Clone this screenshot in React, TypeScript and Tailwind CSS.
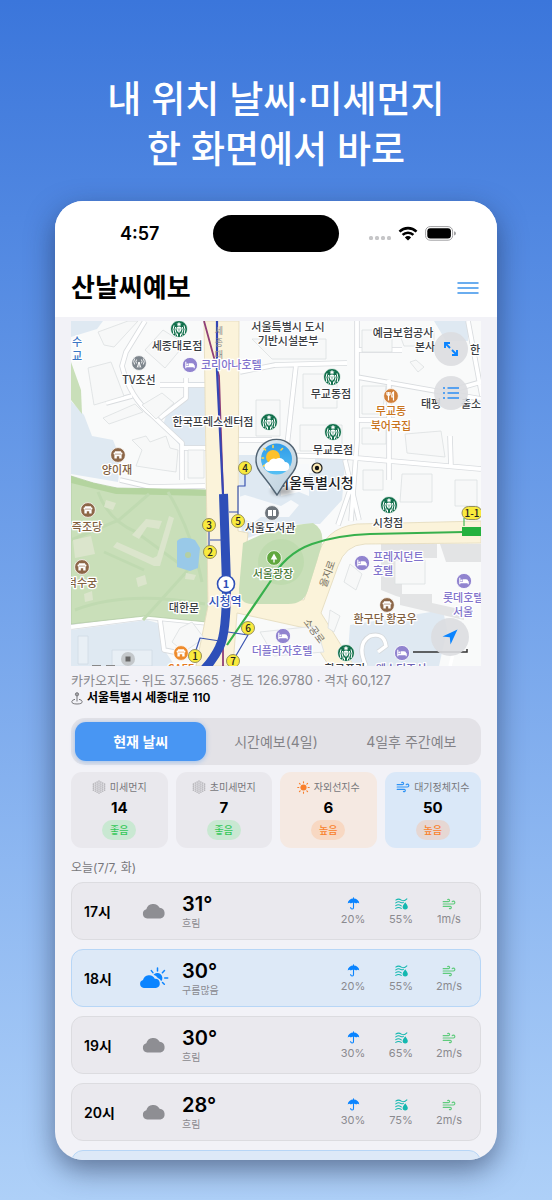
import React from "react";
import { Wind } from "lucide-react";

const sans = "font-['Inter','Noto_Sans_CJK_KR',sans-serif]";

function Starbucks({ x, y }: { x: number; y: number }) {
  return (
    <g transform={`translate(${x} ${y})`}>
      <circle r="8.5" fill="#12704c" stroke="#fff" strokeWidth="0.8" />
      <path d="M0-7.2L.8-5.6 2.5-5.4 1.3-4.2 1.6-2.9 0-3.5-1.6-2.9-1.3-4.2-2.5-5.4-.8-5.6z" fill="#fff" />
      <path d="M-2.6-1.2Q0-4 2.6-1.2Q2.6 2.6 0 3.8Q-2.6 2.6-2.6-1.2z" fill="#fff" />
      <path d="M-1.5-.2h1M.5-.2h1M-.8 1.9h1.6M0 0v1" stroke="#12704c" strokeWidth="0.6" />
      <path d="M-3.4-2Q-4.6 1-3.2 3.2T-3.6 6.6M3.4-2Q4.6 1 3.2 3.2T3.6 6.6M-5-3.6Q-6.8 0-5.2 5M5-3.6Q6.8 0 5.2 5M-1.5 4.6v2.8M1.5 4.6v2.8" fill="none" stroke="#fff" strokeWidth="1" />
    </g>
  );
}

function Hotel({ x, y }: { x: number; y: number }) {
  return (
    <g transform={`translate(${x} ${y})`}>
      <circle r="7.6" fill="#9184cf" stroke="#fff" strokeWidth="0.8" />
      <path d="M-4.2-3.2v6.4M-4.2 1.6h8.4M4.2 3.2V.2" stroke="#fff" strokeWidth="1.1" fill="none" />
      <path d="M-1.4-1.8h3.4q2.2 0 2.2 2.2v.6h-5.6z" fill="#fff" />
      <circle cx="-2.7" cy="-.4" r="1" fill="#fff" />
    </g>
  );
}

function Palace({ x, y, color = "#8d6748" }: { x: number; y: number; color?: string }) {
  return (
    <g transform={`translate(${x} ${y})`}>
      <circle r="7.4" fill={color} stroke="#fff" strokeWidth="0.8" />
      <path d="M-4.4-2.2Q-3-2.2-3-3.8h6Q3-2.2 4.4-2.2v1.4H3.6v4.4H1.200V1.200h-2.400v2.400h-2.400V-.8h-.8z" fill="#fff" />
      <path d="M-3-.9h6" stroke={color} strokeWidth="0.6" />
    </g>
  );
}

function Exit({ x, y, n, w = 13 }: { x: number; y: number; n: string; w?: number }) {
  return (
    <g>
      <rect x={x - w / 2} y={y - 6.5} width={w} height="13" rx="6.5" fill="#f9ea3d" stroke="#8a8552" strokeWidth="0.9" />
      <text x={x} y={y + 3.5} textAnchor="middle" fontSize="10" fontWeight="500" fill="#222">{n}</text>
    </g>
  );
}

const labels: { x: number; y: number; t: string; c?: string; a?: "start" | "middle" }[] = [
  { x: 177, y: 350, t: "세종대로점" },
  { x: 139, y: 384, t: "TV조선" },
  { x: 201, y: 369, t: "코리아나호텔", c: "#8173cc", a: "start" },
  { x: 213, y: 426, t: "한국프레스센터점" },
  { x: 288, y: 331, t: "서울특별시 도시" },
  { x: 288, y: 345, t: "기반시설본부" },
  { x: 403, y: 337, t: "예금보험공사" },
  { x: 425, y: 351, t: "본사" },
  { x: 475, y: 354, t: "한" },
  { x: 331, y: 398, t: "무교동점" },
  { x: 333, y: 454, t: "무교로점" },
  { x: 391, y: 415, t: "무교동", c: "#c87420" },
  { x: 391, y: 430, t: "북어국집", c: "#c87420" },
  { x: 431, y: 408, t: "태평" },
  { x: 471, y: 408, t: "출소" },
  { x: 117, y: 474, t: "양이재", c: "#80603f" },
  { x: 87, y: 531, t: "즉조당", c: "#80603f" },
  { x: 82, y: 587, t: "덕수궁", c: "#80603f" },
  { x: 184, y: 612, t: "대한문" },
  { x: 270, y: 532, t: "서울도서관" },
  { x: 273, y: 578, t: "서울광장", c: "#4b7b3c" },
  { x: 388, y: 527, t: "시청점" },
  { x: 373, y: 561, t: "프레지던트", c: "#8173cc", a: "start" },
  { x: 373, y: 575, t: "호텔", c: "#8173cc", a: "start" },
  { x: 443, y: 602, t: "롯데호텔", c: "#8173cc", a: "start" },
  { x: 463, y: 616, t: "서울", c: "#8173cc" },
  { x: 385, y: 623, t: "환구단 황궁우", c: "#80603f" },
  { x: 282, y: 655, t: "더플라자호텔", c: "#8173cc" },
  { x: 345, y: 673, t: "한국프리" },
  { x: 401, y: 673, t: "웨스틴조선", c: "#6d62b4" },
  { x: 77, y: 346, t: "수", c: "#3b76c4" },
  { x: 77, y: 360, t: "교", c: "#3b76c4" },
  { x: 181, y: 673, t: "CAFE", c: "#e57a1f" },
];

const lanes =
  "M145 321L126 352 122 366Q130 398 152 415L182 443 182 480M106 403l26-7M160 418l26-20v-20M160 385h46M182 448h26M240 372l35-7 72-2M296 365l-10 90M357 321v120l-6 80M275 455l70 2 136 12M357 377l124 22M357 350h45M357 420h38M389 380v100M481 382l-35 10M237 440h35M450 436l1 32M345 460l14 60M350 490l-12 35M71 627l76-10 61 6M160 620l4 30 30 6M120 480l30 7 55-1M468 321l14 75";

function CityMap() {
  return (
    <svg viewBox="71 321 410 345" preserveAspectRatio="xMidYMid slice" role="img" aria-label="지도" className="block h-full w-full font-['Noto_Sans_CJK_KR',sans-serif]">
      <rect x="71" y="321" width="410" height="345" fill="#f9fafa" />
      {/* water-blue blocks */}
      <g fill="#dfe9f2">
        <path d="M71 401L84 415 92 436 113 440 121 460 118 482 71 474zM71 321h32l-6 8-26 8z" />
        <path d="M186 382h19v65h-24l-18-22 5-15 16-12z" />
        <path d="M238 455h31v18h46v-18h31l-4 45-22 24h-34l-44 16z" />
        <path d="M71 630l76-10 14 4 2 24 12 18H71z" />
        <path d="M350 625l93-15 4 20-8 36h-92z" />
        <path d="M434 321h34v20h-22z" />
      </g>
      <g fill="#e3e4e5">
        <path d="M381 544h56v14h-28l-7 14v22h30v12l-36-10-15-6zM440 544h41v18h-35z" />
        <path d="M400 596l64 14v10l-64-15z" />
      </g>
      {/* minor roads */}
      <g fill="none" strokeLinejoin="round">
        <path stroke="#d9dcdf" strokeWidth="5.5" d={lanes} />
        <path stroke="#fff" strokeWidth="3.8" d={lanes} />
      </g>
      {/* parks */}
      <path d="M71 476q22 8 46 12l91 2 2 90-3 42-62-6-74 8z" fill="#c9dfb9" stroke="#b3cba4" strokeWidth="0.8" />
      <path d="M71 476q22 8 46 12l91 2v6l-92-2-45-11z" fill="#b4d49f" />
      <path d="M71 362l10 28 1 24-11-14z" fill="#c9dfb9" />
      <g fill="none" stroke="#c0dab1" strokeWidth="3">
        <path d="M98 492q10 28 38 40l52 38-45 50M75 610q50-20 130-6M168 492q24 40 34 90M104 552l40 18M71 540l48-20 30-26" />
      </g>
      <g fill="#dbe5cc">
        <path d="M113 547l4-5 36 16 4-2 12-40 5 2-14 48-6 0zM132 535l14-16 16 2-3 8-12-2-8 12zM136 578l9-3 2 9-9 3zM73 540l18-4 4 18-20 4zM84 594l8-3 1 9-8 2zM106 500l10 3-3 7-9-3zM186 573l10 2-2 5-9-1z" />
      </g>
      <path d="M177 541q6-6 18-1l5 8-2 20-8 3-13-4z" fill="#99c9e8" />
      <circle cx="188" cy="555" r="3" fill="#b4cfa3" />
      {/* arterial roads */}
      <g fill="#fbf3da" stroke="#e5dcc0" strokeWidth="0.9">
        <path d="M204 321h35l-1 210 10 2-6 62 62 5 13-40q6-32 40-36l124-3v22l-116 1q-20 1-27 22l-17 47 33 53h-25l-24-38-68-15-4 53h-37l12-60z" />
      </g>
      <path d="M243 543q18-8 34-16l36-4q14 8 7 28l-12 39q-4 14-20 14h-36q-13 0-13-15z" fill="#c9dfb9" />
      <circle cx="281" cy="562" r="23" fill="#b9d8a9" opacity=".6" />
      {/* building outlines */}
      <g fill="#f7f8f8" stroke="#dcdfe1" strokeWidth="0.8">
        <path d="M88 368l23-6 13 34-30 9zM98 332l30-11h10l-24 26-10-2zM145 350l18-20 22 14-20 24zM142 405l20-12 12 10-18 16zM132 440l14-4 4 6 16-6 4 12 8 2-2 22-14-2-26-4 6-16zM188 450h16v28h-16zM103 418l32-14 8 8-34 12z" />
        <path d="M252 339h74v20h-54zM256 400h24v36h-24zM303 374h34v34h-34zM300 425h42v26h-42zM362 386h24l-4 28h-20zM362 428h24v16h-24zM405 434l36-3 4 26-38-4zM402 474h30v28h-32zM363 470h20v20h-20zM410 362l8 10 6-5-8-7zM398 330h36v16h-30zM455 480h22v26h-22zM362 330h30v22h-30z" />
        <path d="M395 560h30v24h-30zM350 564l12 10-6 16-12-8zM180 628l12-6 12 16-20 14-12-10zM330 610l10 6-6 16-6-4zM260 632l56-6 8 26-50 4z" />
        <path d="M112 650h40v16h-40zM78 636h10v28H78z" fill="#e8eff5" stroke="#cfdae4" />
        <path d="M269 464h40v32l-10-4-18 4v-8h-12zM245 495l-6 2v20l14 6 8-6h28l10-12-8-5-10 6z" stroke="none" fill="#f7f9fb" />
      </g>
      <path d="M366 666q-10-22 4-30 14-4 16 10l-8 6" fill="none" stroke="#d5d9dc" strokeWidth="5" />
      <path d="M366 666q-10-22 4-30 14-4 16 10l-8 6M450 666l6-24" fill="none" stroke="#fff" strokeWidth="3.400" />
      {/* subway lines */}
      <g fill="none" strokeLinejoin="round">
        <path d="M204 321l15 55 4 118M223 640v26" stroke="#8f3f78" strokeWidth="1.8" />
        <path d="M217 321v50l6 123" stroke="#3446b5" strokeWidth="2.2" />
        <path d="M227 645l43-63q14-28 42-38 26-9 58-10l94-2" stroke="#37b04c" strokeWidth="2.2" />
        <path d="M462 531.500h19" stroke="#24b13f" strokeWidth="9" />
        <path d="M464 526v-8" stroke="#24b13f" strokeWidth="1" />
        <path d="M223.500 494l3 90q0 50-7 63-5 11-15 22" stroke="#2e4fb8" strokeWidth="9" />
        <path d="M209 532v20M210 540h14M238 514v-28h7v-12M229 512h9M228 632l20 3-14 24M196 650l4-12 20 3" stroke="#3b55b0" strokeWidth="1.2" />
      </g>
      <g fill="#8b8b8b" fontSize="9">
        <text x="219" y="334" textAnchor="middle">세</text>
        <text x="219" y="346" textAnchor="middle">종</text>
        <text x="219" y="358" textAnchor="middle">대</text>
        <text transform="translate(326 588) rotate(-70)" fill="#756f60" fontSize="10">을지로</text>
        <text transform="translate(303 622) rotate(53)" fill="#756f60" fontSize="10">소공로</text>
      </g>
      {/* points of interest */}
      <Starbucks x={179} y={329} />
      <Starbucks x={269} y={422} />
      <Starbucks x={332} y={377} />
      <Starbucks x={333} y={432} />
      <Starbucks x={389} y={505} />
      <Starbucks x={346} y={653} />
      <Hotel x={190} y={365} />
      <Hotel x={362} y={563} />
      <Hotel x={464} y={581} />
      <Hotel x={283} y={636} />
      <Hotel x={402} y={653} />
      <Palace x={118} y={455} />
      <Palace x={88} y={510} />
      <Palace x={82} y={567} />
      <Palace x={387} y={605} />
      <Palace x={181} y={653} color="#ee8b2c" />
      <g transform="translate(139 363)">
        <circle r="7.400" fill="#7d858c" stroke="#fff" strokeWidth="0.8" />
        <path d="M0-1v5.500M-1.800 4.500L0-1l1.800 5.500M-2.400-3.500q-1.400 2 0 4M2.400-3.500q1.400 2 0 4M-4.300-4.500q-2 3 0 6M4.300-4.500q2 3 0 6" fill="none" stroke="#fff" strokeWidth="0.9" />
      </g>
      <g transform="translate(391 396)">
        <circle r="7.400" fill="#d1803a" stroke="#fff" strokeWidth="0.8" />
        <path d="M-2.500-4v3M-2.500 0v4.500M-4-4v2.500q1.500 1.500 3 0V-4M2.500 4.500V-4q-2 1-1.600 5h1.600" fill="none" stroke="#fff" strokeWidth="1.200" />
      </g>
      <g transform="translate(272 513)">
        <circle r="7.400" fill="#6d747b" stroke="#fff" strokeWidth="0.8" />
        <path d="M-4-3h4v6h-4zM1-3h3v6H1z" fill="#fff" />
      </g>
      <g transform="translate(274 558)">
        <circle r="7.400" fill="#61a83f" stroke="#fff" strokeWidth="0.8" />
        <path d="M0-4.500L3.300 1.500H.7V4.500H-.7V1.500H-3.300z" fill="#fff" />
      </g>
      <g transform="translate(128 659)">
        <circle r="7" fill="#c4c8cb" />
        <rect x="-2.500" y="-2.500" width="5" height="5" fill="#666" />
      </g>
      <path d="M92 665.500h9M106 665.500h9" stroke="#888" />
      <circle cx="317" cy="468" r="5" fill="#fbe9b4" stroke="#222" strokeWidth="1.200" />
      <circle cx="317" cy="468" r="2.200" fill="#111" />
      <g fontSize="11" fontWeight="500" stroke="#fff" strokeWidth="2.500" strokeLinejoin="round" paintOrder="stroke">
        {labels.map((l) => (
          <text key={l.t + l.x + l.y} x={l.x} y={l.y} fill={l.c ?? "#3a3d42"} textAnchor={l.a ?? "middle"}>{l.t}</text>
        ))}
        <text x="315" y="488" textAnchor="middle" fontSize="14" fill="#202226">서울특별시청</text>
        <text x="225" y="606" textAnchor="middle" fontSize="12" fill="#2e4fb8">시청역</text>
      </g>
      <circle cx="226" cy="584" r="8.500" fill="#fff" stroke="#2e4fb8" strokeWidth="1.600" />
      <text x="226" y="588" textAnchor="middle" fontSize="11" fontWeight="700" fill="#2e4fb8">1</text>
      <Exit x={245} y={468} n="4" />
      <Exit x={209} y={525} n="3" />
      <Exit x={210} y={552} n="2" />
      <Exit x={238} y={521} n="5" />
      <Exit x={248} y={628} n="6" />
      <Exit x={233} y={661} n="7" />
      <Exit x={195} y={656} n="1" />
      <Exit x={472} y={513} n="1-1" w={20} />
      <path d="M413 652h54v-3" fill="none" stroke="#333" strokeWidth="1.500" />
      {/* current location pin */}
      <defs>
        <linearGradient id="pin" x1="0" y1="0" x2="1" y2="1">
          <stop offset="0" stopColor="#dfebf3" />
          <stop offset="1" stopColor="#bccfdc" />
        </linearGradient>
        <linearGradient id="sky" x1="0" y1="0" x2="0" y2="1">
          <stop offset="0" stopColor="#2f9be8" />
          <stop offset="1" stopColor="#55c0f4" />
        </linearGradient>
        <filter id="soft" x="-50%" y="-50%" width="200%" height="200%"><feGaussianBlur stdDeviation="2" /></filter>
      </defs>
      <ellipse cx="282" cy="491" rx="11" ry="4" fill="#000" opacity=".3" filter="url(#soft)" />
      <path d="M277 495Q269 483 260 472A20.500 20.500 0 1 1 293 472Q284 483 277 495z" fill="url(#pin)" stroke="#526473" strokeWidth="1.400" />
      <circle cx="276.500" cy="459" r="15.500" fill="url(#sky)" />
      <path d="M273 447.500v-2M265.500 450l-1.500-1.500M281 450l1.500-1.500M263.500 458h-1.500M265 465l-1.500 1" stroke="#ffd54a" strokeWidth="1.600" strokeLinecap="round" />
      <circle cx="273" cy="457" r="7" fill="#fdc12b" />
      <path d="M269 471a4.500 4.500 0 0 1 0-9 5 5 0 0 1 7-3 6 6 0 0 1 9 3 4.500 4.500 0 0 1 0 9z" fill="#fff" />
    </svg>
  );
}

function DotsIcon() {
  const pts: [number, number][] = [];
  for (let r = -3; r <= 3; r++) {
    const n = 7 - Math.abs(r);
    for (let i = 0; i < n; i++) pts.push([7 + r * 1.9, 7 + (i - (n - 1) / 2) * 2]);
  }
  return (
    <svg viewBox="0 0 14 14" className="size-[14px]" aria-hidden="true">
      {pts.map(([x, y]) => <circle key={`${x}-${y}`} cx={x} cy={y} r="0.6" fill="#77777b" />)}
    </svg>
  );
}

function SunIcon() {
  return (
    <svg viewBox="0 0 14 14" className="size-[13px]" aria-hidden="true">
      <circle cx="7" cy="7" r="3.300" fill="#f97f2b" />
      <path d="M7 .8v1.200M7 12v1.200M.8 7H2M12 7h1.200M2.600 2.600l.8.8M10.600 10.600l.8.8M2.600 11.400l.8-.8M10.600 3.400l.8-.8" stroke="#f97f2b" strokeWidth="1.200" strokeLinecap="round" />
    </svg>
  );
}

function CloudIcon() {
  return (
    <svg viewBox="0 0 24 16" className="h-4 w-6" aria-hidden="true">
      <path d="M5.200 15.500A4.700 4.700 0 0 1 4.300 6.300 7.200 7.200 0 0 1 17.600 4.700 5.500 5.500 0 0 1 18.500 15.500z" fill="#8e8e93" />
    </svg>
  );
}

function CloudSunIcon() {
  return (
    <svg viewBox="0 0 30 22" className="h-[22px] w-[30px]" aria-hidden="true">
      <path d="M18.500 1v3M12.300 3.600l1.600 2M25.500 3.600l-2.100 2.200M25.700 11h3M23.500 15.500l1.800 1.800" stroke="#0a84ff" strokeWidth="1.500" strokeLinecap="round" />
      <path d="M14.500 7.800a5 5 0 1 1 7.700 6.500 5 5 0 0 0-3.400-3.200A7.500 7.500 0 0 0 14.500 7.800z" fill="#0a84ff" />
      <path d="M4.800 21A4.100 4.100 0 0 1 4 13 6.300 6.300 0 0 1 15.800 11.700 4.700 4.700 0 0 1 17 21z" fill="#0a84ff" />
    </svg>
  );
}

function UmbrellaIcon() {
  return (
    <svg viewBox="0 0 14 14" className="size-[13px]" aria-hidden="true">
      <path d="M.8 7A6.200 5.400 0 0 1 13.200 7Q11.500 5.600 9.800 7 8.500 5.800 7 6.500 5.500 5.800 4.200 7 2.500 5.600.8 7z" fill="#0a84ff" />
      <path d="M7 .8v10.500a1.500 1.500 0 0 1-3 .2" fill="none" stroke="#0a84ff" strokeWidth="1.200" strokeLinecap="round" />
    </svg>
  );
}

function HumidityIcon() {
  return (
    <svg viewBox="0 0 14 14" className="size-[13px]" aria-hidden="true">
      <path d="M.8 3.300q3-2 6 0t6-1.300M.8 6.300q3-2 5.500-.3 1.500.6 2.700 0M.8 9.300q3-2 6 .3M.8 12.300q3-2 6 0" fill="none" stroke="#14b8b0" strokeWidth="1.100" strokeLinecap="round" />
      <path d="M11 5.600q2.800 3.600 2.800 5a2.800 2.800 0 0 1-5.600 0q0-1.400 2.800-5z" fill="#14b8b0" />
    </svg>
  );
}

const dust = [
  { label: "미세먼지", value: "14", level: "좋음", icon: <DotsIcon />, card: "bg-[#e9e8ed]", badge: "bg-[#c9e8d2] text-[#34c759]" },
  { label: "초미세먼지", value: "7", level: "좋음", icon: <DotsIcon />, card: "bg-[#e9e8ed]", badge: "bg-[#c9e8d2] text-[#34c759]" },
  { label: "자외선지수", value: "6", level: "높음", icon: <SunIcon />, card: "bg-[#f5e9e2]", badge: "bg-[#f8d8c2] text-[#f9822d]" },
  { label: "대기정체지수", value: "50", level: "높음", icon: <Wind className="size-[14px] text-[#2f93f5]" strokeWidth={2} />, card: "bg-[#dae8f8]", badge: "bg-[#e6d7d3] text-[#f9822d]" },
];

const hours = [
  { time: "17시", temp: "31°", sky: "흐림", rain: "20%", hum: "55%", wind: "1m/s", blue: false },
  { time: "18시", temp: "30°", sky: "구름많음", rain: "20%", hum: "55%", wind: "2m/s", blue: true },
  { time: "19시", temp: "30°", sky: "흐림", rain: "30%", hum: "65%", wind: "2m/s", blue: false },
  { time: "20시", temp: "28°", sky: "흐림", rain: "30%", hum: "75%", wind: "2m/s", blue: false },
];

const grayRow = "border-[#dcdce0] bg-[#eae9ee]";
const blueRow = "border-[#b7d6f6] bg-[#dde9f7]";

function Metric({ icon, text }: { icon: React.ReactNode; text: string }) {
  return (
    <div className="flex w-12 flex-col items-center gap-px">
      <span className="grid h-[14px] place-items-center">{icon}</span>
      <span className="text-[11px] leading-[14px] text-[#8a8a8f]">{text}</span>
    </div>
  );
}

export default function App() {
  return (
    <div className={`flex h-screen flex-col bg-linear-to-b from-[#3b76db] to-[#aed0f8] px-[55px] pb-10 text-black ${sans}`}>
      <h1 className="-mx-10 pt-[75px] text-center text-[37px] leading-[50px] font-medium text-white">
        내 위치 날씨·미세먼지<br />한 화면에서 바로
      </h1>
      <main className="mt-[26px] flex min-h-0 flex-1 flex-col overflow-hidden rounded-[28px] bg-[#f2f2f7] shadow-[0_10px_28px_rgba(20,30,60,0.5)]">
        <header className="shrink-0 bg-white">
          <div className="grid grid-cols-[minmax(0,1fr)_126px_minmax(0,1fr)] items-center pt-[14px]">
            <div className="pl-[65px] text-[18px] leading-6 font-semibold">4:57</div>
            <div className="h-[37px] rounded-full bg-black" />
            <div className="flex items-center justify-end gap-[7px] pr-[41px]">
              <svg viewBox="0 0 24 14" className="h-[14px] w-6" aria-hidden="true">
                {[2, 8, 14, 20].map((x) => <rect key={x} x={x} y="9" width="4" height="4" rx="1.500" fill="#c6c6c8" />)}
              </svg>
              <svg viewBox="0 0 20 15" className="h-[15px] w-5" aria-hidden="true">
                <path d="M1.500 5.600a12.200 12.200 0 0 1 17 0M4.600 8.900a7.700 7.700 0 0 1 10.800 0" fill="none" stroke="#000" strokeWidth="2.600" />
                <path d="M10 14.500L6.900 11.400a4.400 4.400 0 0 1 6.200 0z" />
              </svg>
              <svg viewBox="0 0 31 15" className="h-[15px] w-[31px]" aria-hidden="true">
                <rect x=".6" y=".6" width="27" height="13.600" rx="4.500" fill="none" stroke="#a0a0a3" />
                <rect x="2.300" y="2.300" width="23.600" height="10.200" rx="3" />
                <path d="M29 5.200q2 .6 2 2.200t-2 2.200z" fill="#a0a0a3" />
              </svg>
            </div>
          </div>
          <div className="flex h-[65px] items-center justify-between px-4 pt-[6px]">
            <h2 className="text-[26px] leading-8 font-bold">산날씨예보</h2>
            <button type="button" aria-label="메뉴" className="px-[2px]">
              <svg viewBox="0 0 22 14" className="h-[14px] w-[22px]" fill="none" stroke="#3a92ea" strokeWidth="1.500" strokeLinecap="round">
                <path d="M1 2h20M1 7h20M1 12h20" />
              </svg>
            </button>
          </div>
        </header>

        <div className="flex shrink-0 flex-col px-4 pt-1">
          <section className="relative aspect-[410/345] overflow-hidden">
            <CityMap />
            <div className="absolute top-[11px] right-[13px] flex flex-col gap-[10px]">
              <button type="button" aria-label="지도 확대" className="grid size-[34px] place-items-center rounded-full bg-[#dcdde0]/90">
                <svg viewBox="0 0 16 16" className="size-4" fill="none" stroke="#0a84ff" strokeWidth="1.900">
                  <path d="M2 7V2h5M2 2l5 5M14 9v5H9M14 14L9 9" />
                </svg>
              </button>
              <button type="button" aria-label="목록" className="grid size-[34px] place-items-center rounded-full bg-[#dcdde0]/90">
                <svg viewBox="0 0 16 14" className="h-[14px] w-4" fill="none" stroke="#2b8df5" strokeWidth="1.500">
                  <path d="M0 2h2M0 7h2M0 12h2M4.500 2H16M4.500 7H16M4.500 12H16" />
                </svg>
              </button>
            </div>
            <button type="button" aria-label="내 위치" className="absolute right-3 bottom-[10px] grid size-[38px] place-items-center rounded-full bg-[#dcdde0]/90">
              <svg viewBox="0 0 16 16" className="size-4" fill="#0a84ff" aria-hidden="true">
                <path d="M15.500.5L8.500 15.500 7.800 8.200.5 7.500z" />
              </svg>
            </button>
          </section>

          <p className="pt-[5px] text-[13px] leading-[18px] whitespace-nowrap text-[#8a8a8f]">카카오지도 · 위도 37.5665 · 경도 126.9780 · 격자 60,127</p>
          <p className="flex items-center gap-1 text-[12px] leading-[18px] font-semibold">
            <svg viewBox="0 0 12 13" className="h-[13px] w-3" fill="none" stroke="#77777b" aria-hidden="true">
              <circle cx="6" cy="2.300" r="1.600" fill="#a5a5a9" />
              <path d="M6 4v5.500M4 7.300Q.8 8 .8 9.700.8 12 6 12t5.200-2.300Q11.200 8 8 7.300" />
            </svg>
            서울특별시 세종대로 110
          </p>

          <nav className="mt-[11px] flex h-[47px] gap-1 rounded-[14px] bg-[#e3e2e7] p-1 text-[14px]">
            <button type="button" className="flex-1 rounded-[11px] bg-[#4896f3] font-semibold text-white shadow-[0_1px_5px_rgba(72,150,243,0.45)]">현재 날씨</button>
            <button type="button" className="flex-1 text-[#838388]">시간예보(4일)</button>
            <button type="button" className="flex-1 text-[#838388]">4일후 주간예보</button>
          </nav>

          <section className="mt-[7px] grid grid-cols-4 gap-2">
            {dust.map((d) => (
              <div key={d.label} className={`flex h-[76px] flex-col items-center rounded-[11px] pt-2 ${d.card}`}>
                <div className="flex items-center gap-1 text-[10px] leading-[14px] whitespace-nowrap text-[#77777b]">
                  {d.icon}
                  {d.label}
                </div>
                <div className="mt-1 text-[15px] leading-5 font-bold">{d.value}</div>
                <div className={`mt-[2px] rounded-full px-2 text-[10px] leading-5 font-medium ${d.badge}`}>{d.level}</div>
              </div>
            ))}
          </section>

          <h3 className="mt-[11px] text-[12px] leading-[18px] text-[#77777b]">오늘(7/7, 화)</h3>
          <ul className="mt-[5px] flex flex-col gap-[9px]">
            {hours.map((h) => (
              <li key={h.time} className={`flex h-[58px] items-center rounded-xl border pr-[7px] pl-3 ${h.blue ? blueRow : grayRow}`}>
                <span className="w-[52px] text-[14px] font-semibold">{h.time}</span>
                <span className="flex w-[36px] justify-center">{h.blue ? <CloudSunIcon /> : <CloudIcon />}</span>
                <div className="flex-1 pl-[10px]">
                  <div className="text-[20px] leading-6 font-semibold">{h.temp}</div>
                  <div className="text-[10px] leading-[14px] text-[#8a8a8f]">{h.sky}</div>
                </div>
                <Metric icon={<UmbrellaIcon />} text={h.rain} />
                <Metric icon={<HumidityIcon />} text={h.hum} />
                <Metric icon={<Wind className="size-[14px] text-[#5fcb7d]" strokeWidth={2} />} text={h.wind} />
              </li>
            ))}
            <li aria-hidden="true" className={`h-[58px] rounded-xl border ${blueRow}`} />
          </ul>
        </div>
      </main>
    </div>
  );
}
